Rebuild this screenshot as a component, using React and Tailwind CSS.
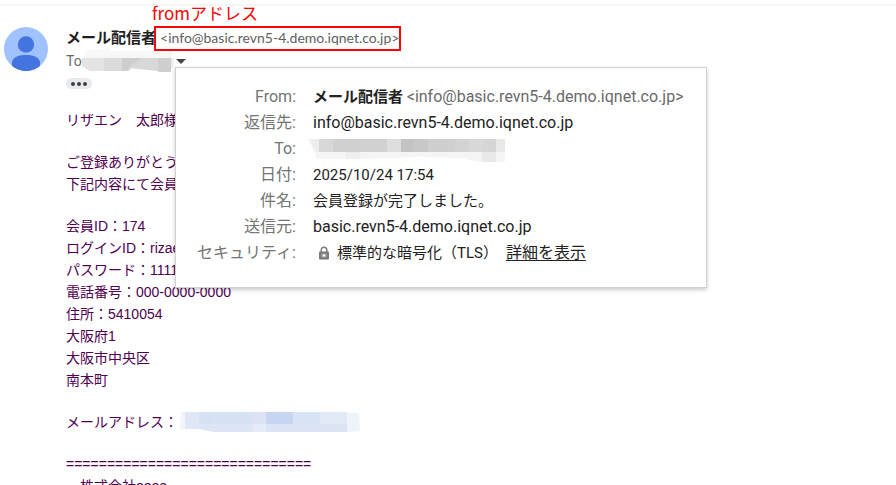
import React from "react";

const ADDRESS = "info@basic.revn5-4.demo.iqnet.co.jp";

function Avatar() {
  return (
    <svg viewBox="0 0 44 44" className="h-11 w-11 shrink-0" role="img" aria-label="メール配信者">
      <defs>
        <clipPath id="avatar-clip">
          <circle cx="22" cy="22" r="22" />
        </clipPath>
      </defs>
      <g clipPath="url(#avatar-clip)">
        <rect width="44" height="44" fill="#a0c2ff" />
        <circle cx="22" cy="17.5" r="8.2" fill="#4374e0" />
        <path d="M8 36C8 30.5 14 28 22 28s14 2.5 14 8v3a22 22 0 0 1-28 0z" fill="#4374e0" />
        <rect x="8" y="38" width="28" height="6" fill="#4374e0" />
      </g>
    </svg>
  );
}

function RecipientMask() {
  return (
    <svg viewBox="0 0 92 26" className="h-[26px] w-[92px] shrink-0" aria-hidden="true">
      <path d="M4 2 28 0v10H1z" fill="#f8f8f8" />
      <path d="M28 3h50v8H28zM78 3h12v8H78z" fill="#f7f7f7" />
      <path d="M0 10h22v13H8L0 18z" fill="#e4e4e4" />
      <path d="M22 10h18v13H22z" fill="#dbdbdb" />
      <path d="M40 10h19v2l-13 11h-6z" fill="#cecece" />
      <path d="M59 10h17v13l-20-2-10-1z" fill="#d6d8d9" />
      <path d="M76 10h13v14H76z" fill="#cfcfcf" />
      <path d="M89 10h3l-1 10-2 1z" fill="#ececec" />
    </svg>
  );
}

function ToMask() {
  const cells = [
    [4, 7, "#ededed"], [11, 14, "#d8d8d8"], [25, 27, "#d0d0d0"], [52, 27, "#d1d1d1"],
    [79, 14, "#dedede"], [93, 13, "#c3c3c3"], [106, 14, "#c8c8c8"], [120, 27, "#cfcfcf"],
    [147, 14, "#d3d3d3"], [161, 14, "#d8d8d8"], [175, 13, "#d5d5d5"], [188, 9, "#e8e8e8"],
  ];
  return (
    <svg viewBox="0 0 198 26" className="-ml-[5px] h-[26px] w-[198px]" aria-hidden="true">
      <path d="M0 3h12v13H6z" fill="#f1f1f1" />
      {cells.map(([x, w, fill]) => (
        <rect key={x} x={x} y="3" width={w} height="13" fill={fill} />
      ))}
      <path d="M0 3v13h7z" fill="#fff" />
      <path d="M7 16h190v10h-24l-22-4-40-1-60 2H8z" fill="#f5f5f5" />
      <path d="M38 16h14v7H38z" fill="#eeeeee" />
      <path d="M174 16h14v10h-14z" fill="#e9e9e9" />
    </svg>
  );
}

function MailMask() {
  const top = [
    [5, 14, "#dfe7f6"], [19, 13, "#d6e1f4"], [32, 41, "#d7e2f4"], [73, 13, "#dde2f4"],
    [86, 27, "#c6d6f1"], [113, 27, "#d8e3f5"], [140, 27, "#e2e9f7"],
  ];
  const bottom = [
    [5, 14, "#dfe8f7"], [19, 54, "#dee6f6"], [73, 13, "#e6edf9"], [86, 81, "#dbe4f5"],
  ];
  return (
    <svg viewBox="0 0 180 22" className="h-[22px] w-[180px]" aria-hidden="true">
      <path d="M1 1h4v17H0z" fill="#f3f4f9" />
      {top.map(([x, w, fill]) => (
        <rect key={x} x={x} y="1" width={w} height="12" fill={fill} />
      ))}
      {bottom.map(([x, w, fill]) => (
        <rect key={x} x={x} y="13" width={w} height="8" fill={fill} />
      ))}
      <path d="M0 18h18l16 3v1H0z" fill="#fff" />
      <path d="M167 2h12l1 18-13 1z" fill="#edf4fc" />
    </svg>
  );
}

function Lock() {
  return (
    <svg viewBox="0 0 12 14" className="ml-[5px] mr-[7px] inline-block h-[14px] w-3 align-[-2px]" aria-hidden="true">
      <path d="M3.2 6V4a2.8 2.8 0 0 1 5.6 0v2" fill="none" stroke="#777" strokeWidth="1.4" />
      <rect x="1" y="5.5" width="10" height="8" rx="1" fill="#777" />
      <rect x="3" y="7.5" width="6" height="4" fill="#999" />
      <circle cx="6" cy="9.5" r="1.3" fill="#fff" />
    </svg>
  );
}

function Row({ label, children }) {
  return (
    <tr>
      <th scope="row" className="w-[120px] p-0 text-right text-[16px] leading-[26px] font-normal text-[#747474]">{label}</th>
      <td className="py-0 pr-0 pl-[17px]">{children}</td>
    </tr>
  );
}

function Details() {
  return (
    <div className="absolute top-full left-[109px] z-10 w-[532px] border border-[#d0d0d0] bg-white pt-4 pb-[21px] shadow-[0_2px_4px_rgba(0,0,0,0.2)]">
      <table className="w-full border-collapse text-[15px] leading-[26px] whitespace-nowrap text-[#222]">
        <tbody>
          <Row label="From:">
            <b className="font-bold">メール配信者</b>{" "}
            <span className="text-[16px] text-[#6a6a6a]">&lt;{ADDRESS}&gt;</span>
          </Row>
          <Row label="返信先:"><span className="text-[16px]">{ADDRESS}</span></Row>
          <Row label="To:"><ToMask /></Row>
          <Row label="日付:">2025/10/24 17:54</Row>
          <Row label="件名:">会員登録が完了しました。</Row>
          <Row label="送信元:"><span className="text-[16px]">basic.revn5-4.demo.iqnet.co.jp</span></Row>
          <Row label="セキュリティ:">
            <Lock />標準的な暗号化（TLS）<a href="#details" className="ml-2 text-[16px] underline underline-offset-2">詳細を表示</a>
          </Row>
        </tbody>
      </table>
    </div>
  );
}

export default function App() {
  return (
    <div className="h-screen overflow-hidden bg-white font-[Roboto,'Noto_Sans_CJK_JP',sans-serif]">
      <div className="h-1" />
      <main className="flex gap-[18px] border-t-2 border-[#f6f6f6] pt-[21px] pl-1">
        <Avatar />
        <div className="min-w-0 flex-1">
          <header className="relative">
            <div className="flex h-[22px] items-center whitespace-nowrap">
              <h1 className="text-[15px] leading-[22px] font-bold text-[#1f1f1f]">メール配信者</h1>
              <div className="relative ml-1 font-[Lato,sans-serif] text-[14px] leading-[22px] text-[#5f5f5f]">
                <span>&lt;{ADDRESS}&gt;</span>
                <span className="absolute -top-px -right-[2px] -bottom-[2px] -left-[6px] border-2 border-[#fa0505]" />
                <span className="absolute bottom-full -left-2 font-['Noto_Sans_CJK_JP',sans-serif] text-[17px] leading-[28px] text-[#fa0505]">fromアドレス</span>
              </div>
            </div>
            <div className="flex h-[18px] items-center pt-[6px] text-[14px] text-[#6a6a6a]">
              <span>To</span>
              <RecipientMask />
              <button type="button" aria-label="詳細を隠す" className="ml-[2px] p-0">
                <svg viewBox="0 0 10 5" className="h-[5px] w-[10px]" aria-hidden="true">
                  <path d="M0 0h10L5 5z" fill="#444" />
                </svg>
              </button>
            </div>
            <Details />
          </header>
          <button type="button" aria-label="省略された内容を表示" className="mt-[11px] flex h-[11px] w-[26px] items-center justify-center gap-[2px] rounded-full bg-[#e8eaed]">
            <i className="h-1 w-1 rounded-full bg-[#3c4043]" />
            <i className="h-1 w-1 rounded-full bg-[#3c4043]" />
            <i className="h-1 w-1 rounded-full bg-[#3c4043]" />
          </button>
          <article className="mt-5 font-['Liberation_Sans','Noto_Sans_CJK_JP',sans-serif] text-[14px] leading-[22px] whitespace-nowrap text-[#500050]">
            <p>リザエン　太郎様</p>
            <div className="mt-5">
              <p>ご登録ありがとうございます。</p>
              <p>下記内容にて会員登録が完了しました。</p>
            </div>
            <div className="mt-5">
              <p>会員ID：174</p>
              <p>ログインID：rizaen</p>
              <p>パスワード：11111111</p>
              <p>電話番号：000-0000-0000</p>
              <p>住所：5410054</p>
              <p>大阪府1</p>
              <p>大阪市中央区</p>
              <p>南本町</p>
            </div>
            <p className="mt-5 flex gap-[2px]">メールアドレス：<MailMask /></p>
            <div className="mt-5">
              <p>==============================</p>
              <p>　株式会社oooo</p>
            </div>
          </article>
        </div>
      </main>
    </div>
  );
}
